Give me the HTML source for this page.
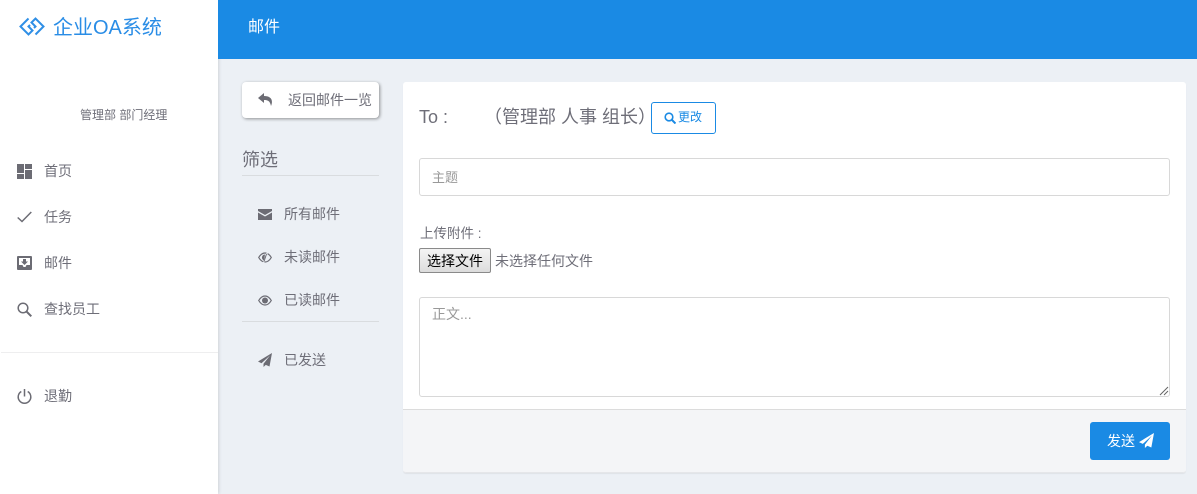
<!DOCTYPE html>
<html lang="zh"><head><meta charset="utf-8"><title>邮件</title>
<style>
*{box-sizing:border-box}
html,body{margin:0;padding:0;width:1197px;height:494px;overflow:hidden;background:#ecf0f5;font-family:"Liberation Sans","Noto Sans CJK SC",sans-serif;color:#6e6e78}
.a{position:absolute;white-space:nowrap}
svg{position:absolute;display:block}
.t{font-size:14px;line-height:20px}
</style></head><body>
<div class="a" style="left:0;top:0;width:218px;height:494px;background:#fff;box-shadow:1px 0 3px rgba(0,0,0,.12)"></div>
<div class="a" style="left:218px;top:0;width:979px;height:59px;background:#1a8ae4"></div>
<svg style="left:19px;top:17px" width="26" height="19" viewBox="0 0 26 19" fill="none" stroke="#2f8fe6" stroke-width="2"><path d="M9.500 1.500 L1.500 9.500 L9.500 17.500 L13.500 13.500 L9.500 9.500 L11 8"/><path d="M16.500 17.500 L24.500 9.500 L16.500 1.500 L12.500 5.500 L16.500 9.500 L15 11"/></svg>
<div class="a" style="left:53px;top:14px;font-size:20px;line-height:29px;color:#2a8de6">企业OA系统</div>
<div class="a" style="left:248px;top:17px;font-size:16px;line-height:22px;color:#fff">邮件</div>
<div class="a" style="left:80px;top:106px;font-size:12px;line-height:18px">管理部 部门经理</div>

<svg style="left:17px;top:164px" width="15" height="15" viewBox="0 0 15 15" fill="#6c6c74"><path d="M0 0h7v9H0zM8 0h7v5H8zM0 10h7v5H0zM8 6h7v9H8z"/></svg>
<div class="a t" style="left:44px;top:161px">首页</div>
<svg style="left:17px;top:211px" width="15" height="12" viewBox="0 0 15 12" fill="none" stroke="#6c6c74" stroke-width="1.500"><path d="M.7 6.500 L5 10.500 L14.300 1"/></svg>
<div class="a t" style="left:44px;top:207px">任务</div>
<svg style="left:17px;top:256px" width="15" height="14" viewBox="0 0 15 14" fill="#6c6c74"><path fill-rule="evenodd" d="M1 0h13a1 1 0 0 1 1 1v12a1 1 0 0 1-1 1H1a1 1 0 0 1-1-1V1a1 1 0 0 1 1-1zM2 2v7h3.500l1 2h2l1-2H13V2zM6 3h3v2.500h2L7.500 9 4 5.500h2z"/></svg>
<div class="a t" style="left:44px;top:253px">邮件</div>
<svg style="left:17px;top:302px" width="15" height="15" viewBox="0 0 15 15" fill="none" stroke="#6c6c74" stroke-width="1.500"><circle cx="6" cy="6" r="4.800"/><path d="M9.500 9.500 L14.300 14.300" stroke-width="2"/></svg>
<div class="a t" style="left:44px;top:299px">查找员工</div>
<div class="a" style="left:1px;top:352px;width:217px;height:1px;background:#eeeeef"></div>
<svg style="left:17px;top:389px" width="15" height="15" viewBox="0 0 15 15" fill="none" stroke="#6c6c74" stroke-width="1.500"><path d="M4.300 2.500 A6.300 6.300 0 1 0 10.700 2.500"/><path d="M7.500 0 V7.500"/></svg>
<div class="a t" style="left:44px;top:386px">退勤</div>

<div class="a" style="left:242px;top:82px;width:137px;height:36px;background:#fff;border-radius:4px;box-shadow:1px 1px 3px rgba(0,0,0,.4)"></div>
<svg style="left:258px;top:93px" width="15" height="13" viewBox="0 0 15 13" fill="#6c6c74"><path d="M6 0 L0 5 L6 10 V7 C10 7 12 8 13 13 C15.500 7 13 3 6 3z"/></svg>
<div class="a t" style="left:288px;top:90px">返回邮件一览</div>
<div class="a" style="left:242px;top:148px;font-size:18px;line-height:24px">筛选</div>
<div class="a" style="left:242px;top:175px;width:137px;height:1px;background:#d9dcdf"></div>
<svg style="left:258px;top:209px" width="14" height="11" viewBox="0 0 14 11" fill="#6c6c74"><path d="M0 0h14v2L7 6 0 2zM0 3.500L7 7.500 14 3.500V11H0z"/></svg>
<div class="a t" style="left:284px;top:204px">所有邮件</div>
<svg style="left:258px;top:252px" width="14" height="11" viewBox="0 0 14 11"><path fill="none" stroke="#6c6c74" stroke-width="1.200" d="M.7 5.500C2.500 2.500 4.700 1 7 1s4.500 1.500 6.300 4.500C11.500 8.500 9.300 10 7 10S2.500 8.500.7 5.500z"/><path fill="#6c6c74" d="M7 2.500a3 3 0 0 0-2.500 4.700L6 9z"/><path stroke="#ecf0f5" stroke-width="1.300" d="M9.500 0 L5.500 11"/><path stroke="#6c6c74" stroke-width="1" d="M8.500 2 L6 9.500"/></svg>
<div class="a t" style="left:284px;top:247px">未读邮件</div>
<svg style="left:258px;top:295px" width="14" height="11" viewBox="0 0 14 11"><path fill="none" stroke="#6c6c74" stroke-width="1.200" d="M.7 5.500C2.500 2.500 4.700 1 7 1s4.500 1.500 6.300 4.500C11.500 8.500 9.300 10 7 10S2.500 8.500.7 5.500z"/><circle cx="7" cy="5.500" r="3" fill="#6c6c74"/></svg>
<div class="a t" style="left:284px;top:290px">已读邮件</div>
<div class="a" style="left:242px;top:321px;width:137px;height:1px;background:#d9dcdf"></div>
<svg style="left:258px;top:353px" width="14" height="14" viewBox="0 0 14 14" fill="#6c6c74"><path d="M14 0 L0 8.500 L3.500 10.200 L12 2.500 L5.500 10.800 V14 L7.800 11.900 L11.500 13.500z"/></svg>
<div class="a t" style="left:284px;top:350px">已发送</div>

<div class="a" style="left:403px;top:82px;width:783px;height:391px;background:#fff;border-radius:3px;box-shadow:0 1px 1px rgba(0,0,0,.06)"></div>
<div class="a" style="left:419px;top:105px;font-size:18px;line-height:24px">To :</div>
<div class="a" style="left:484px;top:105px;font-size:18px;line-height:24px">（管理部 人事 组长）</div>
<div class="a" style="left:651px;top:102px;width:65px;height:32px;border:1px solid #1a8ae4;border-radius:3px;background:#fff"></div>
<svg style="left:664px;top:112px" width="12" height="12" viewBox="0 0 12 12" fill="none" stroke="#1a8ae4" stroke-width="1.600"><circle cx="5" cy="5" r="3.800"/><path d="M8 8 L11.500 11.500" stroke-width="2"/></svg>
<div class="a" style="left:678px;top:108px;font-size:12px;line-height:18px;color:#1a8ae4">更改</div>

<div class="a" style="left:419px;top:158px;width:751px;height:38px;border:1px solid #d8d8d8;border-radius:3px;background:#fff"></div>
<div class="a" style="left:432px;top:168px;font-size:13px;line-height:19px;color:#999">主题</div>
<div class="a" style="left:420px;top:224px;font-size:13.500px;line-height:20px">上传附件 :</div>
<div class="a" style="left:419px;top:248px;width:72px;height:25px;border:1px solid #8a8a8a;border-radius:2px;background:linear-gradient(#f4f4f4,#dcdcdc);color:#000;font-size:14px;line-height:24px;text-align:center">选择文件</div>
<div class="a" style="left:495px;top:251px;font-size:14px;line-height:20px">未选择任何文件</div>
<div class="a" style="left:419px;top:297px;width:751px;height:100px;border:1px solid #d8d8d8;border-radius:3px;background:#fff"></div>
<div class="a" style="left:432px;top:304px;font-size:14px;line-height:20px;color:#999">正文...</div>
<svg style="left:1159px;top:386px" width="10" height="10" viewBox="0 0 10 10" stroke="#666" stroke-width="1" fill="none"><path d="M1 9 L9 1M5 9 L9 5"/></svg>

<div class="a" style="left:403px;top:409px;width:783px;height:64px;background:#f4f5f7;border-top:1px solid #dcdcdc;border-bottom:1px solid #e5e6e9;border-radius:0 0 3px 3px"></div>
<div class="a" style="left:1090px;top:422px;width:80px;height:38px;background:#1a8ae4;border-radius:3px"></div>
<div class="a" style="left:1107px;top:431px;font-size:14px;line-height:20px;color:#fff">发送</div>
<svg style="left:1139px;top:433px" width="15" height="15" viewBox="0 0 14 14" fill="#fff"><path d="M14 0 L0 8.500 L3.500 10.200 L12 2.500 L5.500 10.800 V14 L7.800 11.900 L11.500 13.500z"/></svg>
</body></html>
